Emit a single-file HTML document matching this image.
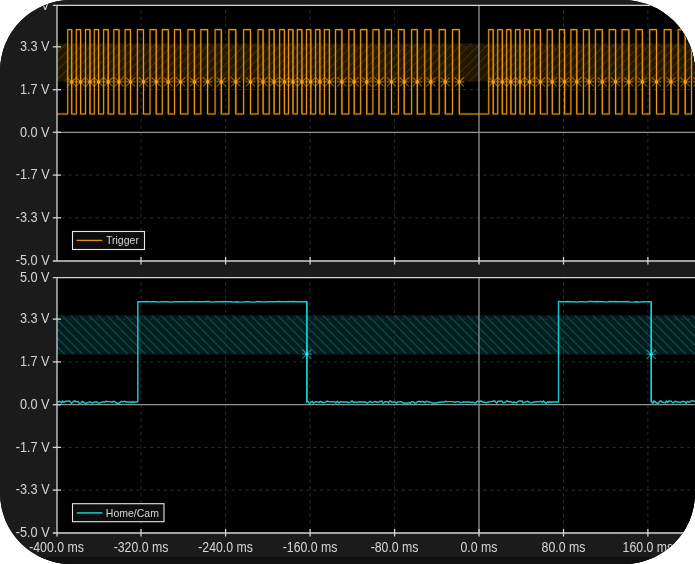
<!DOCTYPE html>
<html><head><meta charset="utf-8"><title>Scope</title>
<style>
html,body{margin:0;padding:0;background:#fff;}
body{width:695px;height:564px;overflow:hidden;}
#scope{width:695px;height:564px;border-radius:71px 72px 71px 71px;overflow:hidden;background:#1b1b1b;position:relative;}
#scope svg{display:block;}
</style></head><body>
<div id="scope">
<svg width="695" height="564" viewBox="0 0 695 564">
<defs>
<clipPath id="c1"><rect x="57" y="5.3" width="640" height="255.7"/></clipPath>
<clipPath id="c2"><rect x="57" y="277.6" width="640" height="255.4"/></clipPath>
<filter id="bl" x="-5%" y="-5%" width="110%" height="110%"><feGaussianBlur stdDeviation="0.45"/></filter>
<filter id="bt" x="-5%" y="-5%" width="110%" height="110%"><feGaussianBlur stdDeviation="0.3"/></filter>
<filter id="bh" x="-5%" y="-5%" width="110%" height="110%"><feGaussianBlur stdDeviation="0.7"/></filter>
</defs>
<rect width="695" height="564" fill="#1b1b1b"/>
<rect y="556.6" width="695" height="8" fill="#101010"/>
<rect x="57" y="5.3" width="640" height="255.7" fill="#000"/>
<rect x="57" y="277.6" width="640" height="255.4" fill="#000"/>
<clipPath id="b1"><rect x="57" y="43.6" width="640" height="38.0"/></clipPath>
<clipPath id="b2"><rect x="57" y="315.4" width="640" height="38.8"/></clipPath>
<rect x="57" y="43.6" width="640" height="38.0" fill="#201500" filter="url(#bl)"/>
<rect x="57" y="315.4" width="640" height="38.8" fill="#021f1f" filter="url(#bl)"/>
<g clip-path="url(#b1)"><path d="M-188.3 82L-149.3 43M-179.3 82L-140.3 43M-170.3 82L-131.3 43M-161.3 82L-122.3 43M-152.3 82L-113.3 43M-143.3 82L-104.3 43M-134.3 82L-95.3 43M-125.3 82L-86.3 43M-116.3 82L-77.3 43M-107.3 82L-68.3 43M-98.3 82L-59.3 43M-89.3 82L-50.3 43M-80.3 82L-41.3 43M-71.3 82L-32.3 43M-62.3 82L-23.3 43M-53.3 82L-14.3 43M-44.3 82L-5.3 43M-35.3 82L3.7 43M-26.3 82L12.7 43M-17.3 82L21.7 43M-8.3 82L30.7 43M0.7 82L39.7 43M9.7 82L48.7 43M18.7 82L57.7 43M27.7 82L66.7 43M36.7 82L75.7 43M45.7 82L84.7 43M54.7 82L93.7 43M63.7 82L102.7 43M72.7 82L111.7 43M81.7 82L120.7 43M90.7 82L129.7 43M99.7 82L138.7 43M108.7 82L147.7 43M117.7 82L156.7 43M126.7 82L165.7 43M135.7 82L174.7 43M144.7 82L183.7 43M153.7 82L192.7 43M162.7 82L201.7 43M171.7 82L210.7 43M180.7 82L219.7 43M189.7 82L228.7 43M198.7 82L237.7 43M207.7 82L246.7 43M216.7 82L255.7 43M225.7 82L264.7 43M234.7 82L273.7 43M243.7 82L282.7 43M252.7 82L291.7 43M261.7 82L300.7 43M270.7 82L309.7 43M279.7 82L318.7 43M288.7 82L327.7 43M297.7 82L336.7 43M306.7 82L345.7 43M315.7 82L354.7 43M324.7 82L363.7 43M333.7 82L372.7 43M342.7 82L381.7 43M351.7 82L390.7 43M360.7 82L399.7 43M369.7 82L408.7 43M378.7 82L417.7 43M387.7 82L426.7 43M396.7 82L435.7 43M405.7 82L444.7 43M414.7 82L453.7 43M423.7 82L462.7 43M432.7 82L471.7 43M441.7 82L480.7 43M450.7 82L489.7 43M459.7 82L498.7 43M468.7 82L507.7 43M477.7 82L516.7 43M486.7 82L525.7 43M495.7 82L534.7 43M504.7 82L543.7 43M513.7 82L552.7 43M522.7 82L561.7 43M531.7 82L570.7 43M540.7 82L579.7 43M549.7 82L588.7 43M558.7 82L597.7 43M567.7 82L606.7 43M576.7 82L615.7 43M585.7 82L624.7 43M594.7 82L633.7 43M603.7 82L642.7 43M612.7 82L651.7 43M621.7 82L660.7 43M630.7 82L669.7 43M639.7 82L678.7 43M648.7 82L687.7 43M657.7 82L696.7 43M666.7 82L705.7 43M675.7 82L714.7 43M684.7 82L723.7 43M693.7 82L732.7 43" stroke="#3c2906" stroke-width="1.6" fill="none" filter="url(#bh)"/></g>
<g clip-path="url(#b2)"><path d="M-73.6 315L-33.6 355M-64.6 315L-24.6 355M-55.6 315L-15.6 355M-46.6 315L-6.6 355M-37.6 315L2.4 355M-28.6 315L11.4 355M-19.6 315L20.4 355M-10.6 315L29.4 355M-1.6 315L38.4 355M7.4 315L47.4 355M16.4 315L56.4 355M25.4 315L65.4 355M34.4 315L74.4 355M43.4 315L83.4 355M52.4 315L92.4 355M61.4 315L101.4 355M70.4 315L110.4 355M79.4 315L119.4 355M88.4 315L128.4 355M97.4 315L137.4 355M106.4 315L146.4 355M115.4 315L155.4 355M124.4 315L164.4 355M133.4 315L173.4 355M142.4 315L182.4 355M151.4 315L191.4 355M160.4 315L200.4 355M169.4 315L209.4 355M178.4 315L218.4 355M187.4 315L227.4 355M196.4 315L236.4 355M205.4 315L245.4 355M214.4 315L254.4 355M223.4 315L263.4 355M232.4 315L272.4 355M241.4 315L281.4 355M250.4 315L290.4 355M259.4 315L299.4 355M268.4 315L308.4 355M277.4 315L317.4 355M286.4 315L326.4 355M295.4 315L335.4 355M304.4 315L344.4 355M313.4 315L353.4 355M322.4 315L362.4 355M331.4 315L371.4 355M340.4 315L380.4 355M349.4 315L389.4 355M358.4 315L398.4 355M367.4 315L407.4 355M376.4 315L416.4 355M385.4 315L425.4 355M394.4 315L434.4 355M403.4 315L443.4 355M412.4 315L452.4 355M421.4 315L461.4 355M430.4 315L470.4 355M439.4 315L479.4 355M448.4 315L488.4 355M457.4 315L497.4 355M466.4 315L506.4 355M475.4 315L515.4 355M484.4 315L524.4 355M493.4 315L533.4 355M502.4 315L542.4 355M511.4 315L551.4 355M520.4 315L560.4 355M529.4 315L569.4 355M538.4 315L578.4 355M547.4 315L587.4 355M556.4 315L596.4 355M565.4 315L605.4 355M574.4 315L614.4 355M583.4 315L623.4 355M592.4 315L632.4 355M601.4 315L641.4 355M610.4 315L650.4 355M619.4 315L659.4 355M628.4 315L668.4 355M637.4 315L677.4 355M646.4 315L686.4 355M655.4 315L695.4 355M664.4 315L704.4 355M673.4 315L713.4 355M682.4 315L722.4 355M691.4 315L731.4 355" stroke="#0a4444" stroke-width="1.6" fill="none" filter="url(#bh)"/></g>
<g stroke="#303030" stroke-width="0.9" stroke-dasharray="3.4 3.4" stroke-dashoffset="2.2" fill="none" filter="url(#bl)">
<path d="M141 5.3V261"/>
<path d="M141 277.6V533"/>
<path d="M225.6 5.3V261"/>
<path d="M225.6 277.6V533"/>
<path d="M310.1 5.3V261"/>
<path d="M310.1 277.6V533"/>
<path d="M394.6 5.3V261"/>
<path d="M394.6 277.6V533"/>
<path d="M563.5 5.3V261"/>
<path d="M563.5 277.6V533"/>
<path d="M647.9 5.3V261"/>
<path d="M647.9 277.6V533"/>
<path d="M57 46.8H700"/>
<path d="M57 89.7H700"/>
<path d="M57 175.1H700"/>
<path d="M57 217.8H700"/>
<path d="M57 319.1H700"/>
<path d="M57 361.9H700"/>
<path d="M57 447.4H700"/>
<path d="M57 490.1H700"/>
</g>
<g stroke="#949494" stroke-width="1.3" fill="none" filter="url(#bl)">
<path d="M57 132.3H700"/>
<path d="M57 404.7H700"/>
<path d="M479 5.3V261"/>
<path d="M479 277.6V533"/>
</g>
<g clip-path="url(#c1)"><g filter="url(#bl)"><path d="M57 114 H67.7 V29.6 H71.7 V114 H76.3 V29.6 H80.6 V114 H85.5 V29.6 H90 V114 H94.3 V29.6 H98.6 V114 H103.6 V29.6 H108.2 V114 H113.8 V29.6 H119 V114 H125.1 V29.6 H130.5 V114 H137.4 V29.6 H143.5 V114 H150 V29.6 H156.2 V114 H162.3 V29.6 H168.3 V114 H174.5 V29.6 H180.5 V114 H187.9 V29.6 H194.4 V114 H200.8 V29.6 H207.6 V114 H215.1 V29.6 H221.3 V114 H228.9 V29.6 H235.8 V114 H243.6 V29.6 H250.5 V114 H258 V29.6 H263.1 V114 H269.2 V29.6 H274.1 V114 H279.6 V29.6 H284.4 V114 H288.5 V29.6 H293 V114 H297.3 V29.6 H301.9 V114 H306.5 V29.6 H310.8 V114 H315.6 V29.6 H319.9 V114 H324.4 V29.6 H329.4 V114 H335.5 V29.6 H341.9 V114 H348.8 V29.6 H354.2 V114 H360.6 V29.6 H366.8 V114 H372.9 V29.6 H379 V114 H385.2 V29.6 H391.5 V114 H398.4 V29.6 H404.2 V114 H411.6 V29.6 H417.3 V114 H424.7 V29.6 H430.9 V114 H439.2 V29.6 H445.3 V114 H452.5 V29.6 H459.3 V114 H488.7 V29.6 H493.2 V114 H497.7 V29.6 H502.3 V114 H506.6 V29.6 H510.9 V114 H515.5 V29.6 H520 V114 H524.6 V29.6 H529.6 V114 H534.6 V29.6 H540.4 V114 H547.2 V29.6 H552.3 V114 H559.4 V29.6 H564.6 V114 H570.9 V29.6 H576.8 V114 H583.4 V29.6 H589.2 V114 H595.4 V29.6 H602.3 V114 H609.2 V29.6 H615.6 V114 H622.1 V29.6 H628.9 V114 H636 V29.6 H642.4 V114 H649.7 V29.6 H656.5 V114 H664.2 V29.6 H671 V114 H678.2 V29.6 H685.2 V114 H691.5 V29.6 H698 V114 H700" stroke="#e6930a" stroke-width="2.4" stroke-opacity="0.22" fill="none" stroke-linejoin="round"/><path d="M57 114 H67.7 V29.6 H71.7 V114 H76.3 V29.6 H80.6 V114 H85.5 V29.6 H90 V114 H94.3 V29.6 H98.6 V114 H103.6 V29.6 H108.2 V114 H113.8 V29.6 H119 V114 H125.1 V29.6 H130.5 V114 H137.4 V29.6 H143.5 V114 H150 V29.6 H156.2 V114 H162.3 V29.6 H168.3 V114 H174.5 V29.6 H180.5 V114 H187.9 V29.6 H194.4 V114 H200.8 V29.6 H207.6 V114 H215.1 V29.6 H221.3 V114 H228.9 V29.6 H235.8 V114 H243.6 V29.6 H250.5 V114 H258 V29.6 H263.1 V114 H269.2 V29.6 H274.1 V114 H279.6 V29.6 H284.4 V114 H288.5 V29.6 H293 V114 H297.3 V29.6 H301.9 V114 H306.5 V29.6 H310.8 V114 H315.6 V29.6 H319.9 V114 H324.4 V29.6 H329.4 V114 H335.5 V29.6 H341.9 V114 H348.8 V29.6 H354.2 V114 H360.6 V29.6 H366.8 V114 H372.9 V29.6 H379 V114 H385.2 V29.6 H391.5 V114 H398.4 V29.6 H404.2 V114 H411.6 V29.6 H417.3 V114 H424.7 V29.6 H430.9 V114 H439.2 V29.6 H445.3 V114 H452.5 V29.6 H459.3 V114 H488.7 V29.6 H493.2 V114 H497.7 V29.6 H502.3 V114 H506.6 V29.6 H510.9 V114 H515.5 V29.6 H520 V114 H524.6 V29.6 H529.6 V114 H534.6 V29.6 H540.4 V114 H547.2 V29.6 H552.3 V114 H559.4 V29.6 H564.6 V114 H570.9 V29.6 H576.8 V114 H583.4 V29.6 H589.2 V114 H595.4 V29.6 H602.3 V114 H609.2 V29.6 H615.6 V114 H622.1 V29.6 H628.9 V114 H636 V29.6 H642.4 V114 H649.7 V29.6 H656.5 V114 H664.2 V29.6 H671 V114 H678.2 V29.6 H685.2 V114 H691.5 V29.6 H698 V114 H700" stroke="#e6930a" stroke-width="1.05" fill="none" stroke-linejoin="round"/><path d="M71.7 30.1V113.5M80.6 30.1V113.5M90 30.1V113.5M98.6 30.1V113.5M108.2 30.1V113.5M119 30.1V113.5M130.5 30.1V113.5M143.5 30.1V113.5M156.2 30.1V113.5M168.3 30.1V113.5M180.5 30.1V113.5M194.4 30.1V113.5M207.6 30.1V113.5M221.3 30.1V113.5M235.8 30.1V113.5M250.5 30.1V113.5M263.1 30.1V113.5M274.1 30.1V113.5M284.4 30.1V113.5M293 30.1V113.5M301.9 30.1V113.5M310.8 30.1V113.5M319.9 30.1V113.5M329.4 30.1V113.5M341.9 30.1V113.5M354.2 30.1V113.5M366.8 30.1V113.5M379 30.1V113.5M391.5 30.1V113.5M404.2 30.1V113.5M417.3 30.1V113.5M430.9 30.1V113.5M445.3 30.1V113.5M459.3 30.1V113.5M493.2 30.1V113.5M502.3 30.1V113.5M510.9 30.1V113.5M520 30.1V113.5M529.6 30.1V113.5M540.4 30.1V113.5M552.3 30.1V113.5M564.6 30.1V113.5M576.8 30.1V113.5M589.2 30.1V113.5M602.3 30.1V113.5M615.6 30.1V113.5M628.9 30.1V113.5M642.4 30.1V113.5M656.5 30.1V113.5M671 30.1V113.5M685.2 30.1V113.5M698 30.1V113.5" stroke="#ffa210" stroke-width="0.8" stroke-opacity="0.7" fill="none"/><path d="M66.8 81.9H76.6M71.7 77V86.8M67.1 77.4L76.3 86.4M67.1 86.4L76.3 77.4" stroke="#ffa414" stroke-width="1.1" stroke-opacity="0.55" fill="none"/><circle cx="71.7" cy="81.9" r="1.6" fill="#ffa414" fill-opacity="0.95"/><path d="M75.7 81.9H85.5M80.6 77V86.8M76 77.4L85.2 86.4M76 86.4L85.2 77.4" stroke="#ffa414" stroke-width="1.1" stroke-opacity="0.55" fill="none"/><circle cx="80.6" cy="81.9" r="1.6" fill="#ffa414" fill-opacity="0.95"/><path d="M85.1 81.9H94.9M90 77V86.8M85.4 77.4L94.6 86.4M85.4 86.4L94.6 77.4" stroke="#ffa414" stroke-width="1.1" stroke-opacity="0.55" fill="none"/><circle cx="90" cy="81.9" r="1.6" fill="#ffa414" fill-opacity="0.95"/><path d="M93.7 81.9H103.5M98.6 77V86.8M94 77.4L103.2 86.4M94 86.4L103.2 77.4" stroke="#ffa414" stroke-width="1.1" stroke-opacity="0.55" fill="none"/><circle cx="98.6" cy="81.9" r="1.6" fill="#ffa414" fill-opacity="0.95"/><path d="M103.3 81.9H113.1M108.2 77V86.8M103.6 77.4L112.8 86.4M103.6 86.4L112.8 77.4" stroke="#ffa414" stroke-width="1.1" stroke-opacity="0.55" fill="none"/><circle cx="108.2" cy="81.9" r="1.6" fill="#ffa414" fill-opacity="0.95"/><path d="M114.1 81.9H123.9M119 77V86.8M114.4 77.4L123.6 86.4M114.4 86.4L123.6 77.4" stroke="#ffa414" stroke-width="1.1" stroke-opacity="0.55" fill="none"/><circle cx="119" cy="81.9" r="1.6" fill="#ffa414" fill-opacity="0.95"/><path d="M125.6 81.9H135.4M130.5 77V86.8M125.9 77.4L135.1 86.4M125.9 86.4L135.1 77.4" stroke="#ffa414" stroke-width="1.1" stroke-opacity="0.55" fill="none"/><circle cx="130.5" cy="81.9" r="1.6" fill="#ffa414" fill-opacity="0.95"/><path d="M138.6 81.9H148.4M143.5 77V86.8M138.9 77.4L148.1 86.4M138.9 86.4L148.1 77.4" stroke="#ffa414" stroke-width="1.1" stroke-opacity="0.55" fill="none"/><circle cx="143.5" cy="81.9" r="1.6" fill="#ffa414" fill-opacity="0.95"/><path d="M151.3 81.9H161.1M156.2 77V86.8M151.6 77.4L160.8 86.4M151.6 86.4L160.8 77.4" stroke="#ffa414" stroke-width="1.1" stroke-opacity="0.55" fill="none"/><circle cx="156.2" cy="81.9" r="1.6" fill="#ffa414" fill-opacity="0.95"/><path d="M163.4 81.9H173.2M168.3 77V86.8M163.7 77.4L172.9 86.4M163.7 86.4L172.9 77.4" stroke="#ffa414" stroke-width="1.1" stroke-opacity="0.55" fill="none"/><circle cx="168.3" cy="81.9" r="1.6" fill="#ffa414" fill-opacity="0.95"/><path d="M175.6 81.9H185.4M180.5 77V86.8M175.9 77.4L185.1 86.4M175.9 86.4L185.1 77.4" stroke="#ffa414" stroke-width="1.1" stroke-opacity="0.55" fill="none"/><circle cx="180.5" cy="81.9" r="1.6" fill="#ffa414" fill-opacity="0.95"/><path d="M189.5 81.9H199.3M194.4 77V86.8M189.8 77.4L199 86.4M189.8 86.4L199 77.4" stroke="#ffa414" stroke-width="1.1" stroke-opacity="0.55" fill="none"/><circle cx="194.4" cy="81.9" r="1.6" fill="#ffa414" fill-opacity="0.95"/><path d="M202.7 81.9H212.5M207.6 77V86.8M203 77.4L212.2 86.4M203 86.4L212.2 77.4" stroke="#ffa414" stroke-width="1.1" stroke-opacity="0.55" fill="none"/><circle cx="207.6" cy="81.9" r="1.6" fill="#ffa414" fill-opacity="0.95"/><path d="M216.4 81.9H226.2M221.3 77V86.8M216.7 77.4L225.9 86.4M216.7 86.4L225.9 77.4" stroke="#ffa414" stroke-width="1.1" stroke-opacity="0.55" fill="none"/><circle cx="221.3" cy="81.9" r="1.6" fill="#ffa414" fill-opacity="0.95"/><path d="M230.9 81.9H240.7M235.8 77V86.8M231.2 77.4L240.4 86.4M231.2 86.4L240.4 77.4" stroke="#ffa414" stroke-width="1.1" stroke-opacity="0.55" fill="none"/><circle cx="235.8" cy="81.9" r="1.6" fill="#ffa414" fill-opacity="0.95"/><path d="M245.6 81.9H255.4M250.5 77V86.8M245.9 77.4L255.1 86.4M245.9 86.4L255.1 77.4" stroke="#ffa414" stroke-width="1.1" stroke-opacity="0.55" fill="none"/><circle cx="250.5" cy="81.9" r="1.6" fill="#ffa414" fill-opacity="0.95"/><path d="M258.2 81.9H268M263.1 77V86.8M258.5 77.4L267.7 86.4M258.5 86.4L267.7 77.4" stroke="#ffa414" stroke-width="1.1" stroke-opacity="0.55" fill="none"/><circle cx="263.1" cy="81.9" r="1.6" fill="#ffa414" fill-opacity="0.95"/><path d="M269.2 81.9H279M274.1 77V86.8M269.5 77.4L278.7 86.4M269.5 86.4L278.7 77.4" stroke="#ffa414" stroke-width="1.1" stroke-opacity="0.55" fill="none"/><circle cx="274.1" cy="81.9" r="1.6" fill="#ffa414" fill-opacity="0.95"/><path d="M279.5 81.9H289.3M284.4 77V86.8M279.8 77.4L289 86.4M279.8 86.4L289 77.4" stroke="#ffa414" stroke-width="1.1" stroke-opacity="0.55" fill="none"/><circle cx="284.4" cy="81.9" r="1.6" fill="#ffa414" fill-opacity="0.95"/><path d="M288.1 81.9H297.9M293 77V86.8M288.4 77.4L297.6 86.4M288.4 86.4L297.6 77.4" stroke="#ffa414" stroke-width="1.1" stroke-opacity="0.55" fill="none"/><circle cx="293" cy="81.9" r="1.6" fill="#ffa414" fill-opacity="0.95"/><path d="M297 81.9H306.8M301.9 77V86.8M297.3 77.4L306.5 86.4M297.3 86.4L306.5 77.4" stroke="#ffa414" stroke-width="1.1" stroke-opacity="0.55" fill="none"/><circle cx="301.9" cy="81.9" r="1.6" fill="#ffa414" fill-opacity="0.95"/><path d="M305.9 81.9H315.7M310.8 77V86.8M306.2 77.4L315.4 86.4M306.2 86.4L315.4 77.4" stroke="#ffa414" stroke-width="1.1" stroke-opacity="0.55" fill="none"/><circle cx="310.8" cy="81.9" r="1.6" fill="#ffa414" fill-opacity="0.95"/><path d="M315 81.9H324.8M319.9 77V86.8M315.3 77.4L324.5 86.4M315.3 86.4L324.5 77.4" stroke="#ffa414" stroke-width="1.1" stroke-opacity="0.55" fill="none"/><circle cx="319.9" cy="81.9" r="1.6" fill="#ffa414" fill-opacity="0.95"/><path d="M324.5 81.9H334.3M329.4 77V86.8M324.8 77.4L334 86.4M324.8 86.4L334 77.4" stroke="#ffa414" stroke-width="1.1" stroke-opacity="0.55" fill="none"/><circle cx="329.4" cy="81.9" r="1.6" fill="#ffa414" fill-opacity="0.95"/><path d="M337 81.9H346.8M341.9 77V86.8M337.3 77.4L346.5 86.4M337.3 86.4L346.5 77.4" stroke="#ffa414" stroke-width="1.1" stroke-opacity="0.55" fill="none"/><circle cx="341.9" cy="81.9" r="1.6" fill="#ffa414" fill-opacity="0.95"/><path d="M349.3 81.9H359.1M354.2 77V86.8M349.6 77.4L358.8 86.4M349.6 86.4L358.8 77.4" stroke="#ffa414" stroke-width="1.1" stroke-opacity="0.55" fill="none"/><circle cx="354.2" cy="81.9" r="1.6" fill="#ffa414" fill-opacity="0.95"/><path d="M361.9 81.9H371.7M366.8 77V86.8M362.2 77.4L371.4 86.4M362.2 86.4L371.4 77.4" stroke="#ffa414" stroke-width="1.1" stroke-opacity="0.55" fill="none"/><circle cx="366.8" cy="81.9" r="1.6" fill="#ffa414" fill-opacity="0.95"/><path d="M374.1 81.9H383.9M379 77V86.8M374.4 77.4L383.6 86.4M374.4 86.4L383.6 77.4" stroke="#ffa414" stroke-width="1.1" stroke-opacity="0.55" fill="none"/><circle cx="379" cy="81.9" r="1.6" fill="#ffa414" fill-opacity="0.95"/><path d="M386.6 81.9H396.4M391.5 77V86.8M386.9 77.4L396.1 86.4M386.9 86.4L396.1 77.4" stroke="#ffa414" stroke-width="1.1" stroke-opacity="0.55" fill="none"/><circle cx="391.5" cy="81.9" r="1.6" fill="#ffa414" fill-opacity="0.95"/><path d="M399.3 81.9H409.1M404.2 77V86.8M399.6 77.4L408.8 86.4M399.6 86.4L408.8 77.4" stroke="#ffa414" stroke-width="1.1" stroke-opacity="0.55" fill="none"/><circle cx="404.2" cy="81.9" r="1.6" fill="#ffa414" fill-opacity="0.95"/><path d="M412.4 81.9H422.2M417.3 77V86.8M412.7 77.4L421.9 86.4M412.7 86.4L421.9 77.4" stroke="#ffa414" stroke-width="1.1" stroke-opacity="0.55" fill="none"/><circle cx="417.3" cy="81.9" r="1.6" fill="#ffa414" fill-opacity="0.95"/><path d="M426 81.9H435.8M430.9 77V86.8M426.3 77.4L435.5 86.4M426.3 86.4L435.5 77.4" stroke="#ffa414" stroke-width="1.1" stroke-opacity="0.55" fill="none"/><circle cx="430.9" cy="81.9" r="1.6" fill="#ffa414" fill-opacity="0.95"/><path d="M440.4 81.9H450.2M445.3 77V86.8M440.7 77.4L449.9 86.4M440.7 86.4L449.9 77.4" stroke="#ffa414" stroke-width="1.1" stroke-opacity="0.55" fill="none"/><circle cx="445.3" cy="81.9" r="1.6" fill="#ffa414" fill-opacity="0.95"/><path d="M454.4 81.9H464.2M459.3 77V86.8M454.7 77.4L463.9 86.4M454.7 86.4L463.9 77.4" stroke="#ffa414" stroke-width="1.1" stroke-opacity="0.55" fill="none"/><circle cx="459.3" cy="81.9" r="1.6" fill="#ffa414" fill-opacity="0.95"/><path d="M488.3 81.9H498.1M493.2 77V86.8M488.6 77.4L497.8 86.4M488.6 86.4L497.8 77.4" stroke="#ffa414" stroke-width="1.1" stroke-opacity="0.55" fill="none"/><circle cx="493.2" cy="81.9" r="1.6" fill="#ffa414" fill-opacity="0.95"/><path d="M497.4 81.9H507.2M502.3 77V86.8M497.7 77.4L506.9 86.4M497.7 86.4L506.9 77.4" stroke="#ffa414" stroke-width="1.1" stroke-opacity="0.55" fill="none"/><circle cx="502.3" cy="81.9" r="1.6" fill="#ffa414" fill-opacity="0.95"/><path d="M506 81.9H515.8M510.9 77V86.8M506.3 77.4L515.5 86.4M506.3 86.4L515.5 77.4" stroke="#ffa414" stroke-width="1.1" stroke-opacity="0.55" fill="none"/><circle cx="510.9" cy="81.9" r="1.6" fill="#ffa414" fill-opacity="0.95"/><path d="M515.1 81.9H524.9M520 77V86.8M515.4 77.4L524.6 86.4M515.4 86.4L524.6 77.4" stroke="#ffa414" stroke-width="1.1" stroke-opacity="0.55" fill="none"/><circle cx="520" cy="81.9" r="1.6" fill="#ffa414" fill-opacity="0.95"/><path d="M524.7 81.9H534.5M529.6 77V86.8M525 77.4L534.2 86.4M525 86.4L534.2 77.4" stroke="#ffa414" stroke-width="1.1" stroke-opacity="0.55" fill="none"/><circle cx="529.6" cy="81.9" r="1.6" fill="#ffa414" fill-opacity="0.95"/><path d="M535.5 81.9H545.3M540.4 77V86.8M535.8 77.4L545 86.4M535.8 86.4L545 77.4" stroke="#ffa414" stroke-width="1.1" stroke-opacity="0.55" fill="none"/><circle cx="540.4" cy="81.9" r="1.6" fill="#ffa414" fill-opacity="0.95"/><path d="M547.4 81.9H557.2M552.3 77V86.8M547.7 77.4L556.9 86.4M547.7 86.4L556.9 77.4" stroke="#ffa414" stroke-width="1.1" stroke-opacity="0.55" fill="none"/><circle cx="552.3" cy="81.9" r="1.6" fill="#ffa414" fill-opacity="0.95"/><path d="M559.7 81.9H569.5M564.6 77V86.8M560 77.4L569.2 86.4M560 86.4L569.2 77.4" stroke="#ffa414" stroke-width="1.1" stroke-opacity="0.55" fill="none"/><circle cx="564.6" cy="81.9" r="1.6" fill="#ffa414" fill-opacity="0.95"/><path d="M571.9 81.9H581.7M576.8 77V86.8M572.2 77.4L581.4 86.4M572.2 86.4L581.4 77.4" stroke="#ffa414" stroke-width="1.1" stroke-opacity="0.55" fill="none"/><circle cx="576.8" cy="81.9" r="1.6" fill="#ffa414" fill-opacity="0.95"/><path d="M584.3 81.9H594.1M589.2 77V86.8M584.6 77.4L593.8 86.4M584.6 86.4L593.8 77.4" stroke="#ffa414" stroke-width="1.1" stroke-opacity="0.55" fill="none"/><circle cx="589.2" cy="81.9" r="1.6" fill="#ffa414" fill-opacity="0.95"/><path d="M597.4 81.9H607.2M602.3 77V86.8M597.7 77.4L606.9 86.4M597.7 86.4L606.9 77.4" stroke="#ffa414" stroke-width="1.1" stroke-opacity="0.55" fill="none"/><circle cx="602.3" cy="81.9" r="1.6" fill="#ffa414" fill-opacity="0.95"/><path d="M610.7 81.9H620.5M615.6 77V86.8M611 77.4L620.2 86.4M611 86.4L620.2 77.4" stroke="#ffa414" stroke-width="1.1" stroke-opacity="0.55" fill="none"/><circle cx="615.6" cy="81.9" r="1.6" fill="#ffa414" fill-opacity="0.95"/><path d="M624 81.9H633.8M628.9 77V86.8M624.3 77.4L633.5 86.4M624.3 86.4L633.5 77.4" stroke="#ffa414" stroke-width="1.1" stroke-opacity="0.55" fill="none"/><circle cx="628.9" cy="81.9" r="1.6" fill="#ffa414" fill-opacity="0.95"/><path d="M637.5 81.9H647.3M642.4 77V86.8M637.8 77.4L647 86.4M637.8 86.4L647 77.4" stroke="#ffa414" stroke-width="1.1" stroke-opacity="0.55" fill="none"/><circle cx="642.4" cy="81.9" r="1.6" fill="#ffa414" fill-opacity="0.95"/><path d="M651.6 81.9H661.4M656.5 77V86.8M651.9 77.4L661.1 86.4M651.9 86.4L661.1 77.4" stroke="#ffa414" stroke-width="1.1" stroke-opacity="0.55" fill="none"/><circle cx="656.5" cy="81.9" r="1.6" fill="#ffa414" fill-opacity="0.95"/><path d="M666.1 81.9H675.9M671 77V86.8M666.4 77.4L675.6 86.4M666.4 86.4L675.6 77.4" stroke="#ffa414" stroke-width="1.1" stroke-opacity="0.55" fill="none"/><circle cx="671" cy="81.9" r="1.6" fill="#ffa414" fill-opacity="0.95"/><path d="M680.3 81.9H690.1M685.2 77V86.8M680.6 77.4L689.8 86.4M680.6 86.4L689.8 77.4" stroke="#ffa414" stroke-width="1.1" stroke-opacity="0.55" fill="none"/><circle cx="685.2" cy="81.9" r="1.6" fill="#ffa414" fill-opacity="0.95"/><path d="M693.1 81.9H702.9M698 77V86.8M693.4 77.4L702.6 86.4M693.4 86.4L702.6 77.4" stroke="#ffa414" stroke-width="1.1" stroke-opacity="0.55" fill="none"/><circle cx="698" cy="81.9" r="1.6" fill="#ffa414" fill-opacity="0.95"/></g></g>
<g clip-path="url(#c2)"><g filter="url(#bl)"><path d="M57 401.9 L58.1 402.2 L59.2 401.3 L60.3 401.9 L61.4 402.9 L62.5 400.9 L63.6 402.2 L65.9 401.3 L67 401.3 L69.3 400.9 L70.4 401.9 L71.5 403.2 L73.8 400.9 L74.9 400.9 L76 401.9 L78.3 401.6 L79.4 403.2 L81.1 402.9 L82.2 401.3 L83.3 401.9 L84.4 402.9 L85.5 403.2 L86.6 403.2 L87.7 402.5 L90 401.9 L92.3 403.2 L94.6 401.9 L96.3 401.9 L97.4 401.9 L98.5 403.2 L100.2 402.9 L102.5 401.9 L104.8 401.9 L105.9 401.3 L108.2 401.6 L109.9 401.6 L112.2 402.2 L113.3 401.3 L115 401.9 L116.7 403.2 L119 403.2 L121.3 401.3 L122.4 401.9 L124.7 401.3 L125.8 401.9 L128.1 401.9 L130.4 401.9 L131.5 402.5 L133.2 401.6 L134.3 402.5 L135.4 401.9 L137.1 401.6 L137.8 401.9 L137.8 301.8 L140.8 301.8 L143.8 301.8 L146.8 301.5 L149.8 301.8 L152.8 301.8 L155.8 301.8 L158.8 302.1 L161.8 301.8 L164.8 301.8 L167.8 301.8 L170.8 302.1 L173.8 301.8 L176.8 301.8 L179.8 301.8 L182.8 301.8 L185.8 301.8 L188.8 301.8 L191.8 301.5 L194.8 301.8 L197.8 301.8 L200.8 301.8 L203.8 301.8 L206.8 301.5 L209.8 301.8 L212.8 302.1 L215.8 301.8 L218.8 301.8 L221.8 301.8 L224.8 301.5 L227.8 301.8 L230.8 301.8 L233.8 302.1 L236.8 301.8 L239.8 302.1 L242.8 302.1 L245.8 301.8 L248.8 301.8 L251.8 302.1 L254.8 302.1 L257.8 301.5 L260.8 301.8 L263.8 302.1 L266.8 301.8 L269.8 301.8 L272.8 301.8 L275.8 301.8 L278.8 301.5 L281.8 301.8 L284.8 301.8 L287.8 301.5 L290.8 301.8 L293.8 301.5 L296.8 301.8 L299.8 301.8 L302.8 301.8 L305.8 301.5 L306.9 301.8 L306.9 401.9 L308 401.3 L309.1 403.2 L310.2 402.9 L311.3 401.9 L312.4 401.3 L313.5 403.2 L315.8 401.6 L317.5 401.9 L319.2 402.5 L320.3 401.3 L322.6 402.5 L324.9 402.5 L326.6 401.3 L327.7 401.3 L329.4 401.9 L331.7 401.6 L332.8 401.9 L334.5 401.6 L335.6 402.9 L337.3 401.3 L339 402.9 L340.7 401.6 L342.4 401.9 L344.1 401.9 L345.2 401.9 L347.5 401.9 L348.6 402.9 L350.9 401.9 L352 400.9 L353.7 402.5 L355.4 401.9 L357.1 402.5 L358.8 401.9 L359.9 401.9 L361 401.9 L363.3 401.9 L365 401.9 L367.3 403.2 L368.4 402.5 L370.1 401.3 L371.2 402.2 L372.3 402.5 L373.4 402.2 L375.1 401.3 L377.4 402.5 L379.7 401.3 L380.8 401.6 L381.9 400.9 L383 403.2 L385.3 401.6 L387.6 401.9 L388.7 402.9 L389.8 400.9 L390.9 401.3 L392 402.2 L393.1 401.9 L394.2 401.9 L395.3 401.9 L396.4 403.2 L398.1 401.9 L400.4 401.6 L401.5 401.9 L403.8 403.2 L406.1 402.9 L407.2 402.9 L408.3 402.9 L409.4 402.5 L410.5 403.2 L411.6 401.6 L412.7 401.6 L415 403.2 L416.1 402.9 L417.2 401.9 L419.5 401.3 L420.6 401.9 L421.7 401.9 L422.8 401.3 L425.1 402.9 L426.2 401.3 L428.5 401.9 L429.6 401.9 L431.9 402.9 L434.2 402.9 L435.3 402.9 L437 402.9 L438.1 402.5 L439.2 402.2 L440.3 402.2 L442.6 401.9 L443.7 401.9 L446 401.3 L447.1 401.9 L448.2 401.6 L449.9 401.6 L451.6 401.6 L453.9 401.9 L455 402.2 L457.3 401.6 L458.4 401.6 L460.7 402.9 L463 401.9 L465.3 401.9 L467 401.9 L468.1 401.9 L469.2 401.9 L471.5 402.5 L472.6 402.2 L474.3 402.9 L476 402.9 L477.1 401.3 L478.2 401.3 L479.3 401.9 L481 400.9 L482.1 401.9 L483.2 402.2 L484.9 402.2 L486 402.9 L488.3 401.9 L489.4 401.9 L490.5 401.6 L492.8 401.3 L494.5 400.9 L495.6 401.9 L496.7 403.2 L497.8 401.3 L499.5 401.3 L501.8 400.9 L503.5 402.9 L505.8 401.9 L506.9 400.9 L508 401.3 L509.1 401.9 L510.2 401.6 L511.3 401.9 L513 402.9 L514.1 401.9 L516.4 402.9 L517.5 401.9 L519.2 400.9 L520.9 400.9 L522 400.9 L523.1 402.9 L525.4 401.9 L527.7 401.3 L530 402.5 L532.3 402.9 L534 401.9 L535.1 401.9 L536.2 401.6 L538.5 401.9 L539.6 401.6 L540.7 401.3 L542.4 402.2 L543.5 400.9 L544.6 402.2 L546.3 403.2 L547.4 401.9 L548.5 402.5 L549.6 401.6 L551.3 402.5 L552.4 401.9 L554.1 401.9 L555.8 401.9 L556.9 401.9 L558 401.9 L558.5 401.9 L558.5 301.5 L561.5 301.8 L564.5 301.8 L567.5 301.5 L570.5 301.8 L573.5 301.8 L576.5 302.1 L579.5 301.8 L582.5 301.8 L585.5 302.1 L588.5 301.5 L591.5 301.5 L594.5 301.8 L597.5 301.5 L600.5 301.8 L603.5 301.8 L606.5 302.1 L609.5 301.5 L612.5 301.8 L615.5 301.5 L618.5 301.8 L621.5 301.8 L624.5 301.8 L627.5 301.5 L630.5 302.1 L633.5 302.1 L636.5 301.8 L639.5 302.1 L642.5 301.8 L645.5 301.8 L648.5 301.8 L651.2 301.8 L651.2 401.6 L652.9 403.2 L654 400.9 L656.3 402.9 L657.4 402.9 L658.5 403.2 L659.6 401.3 L660.7 400.9 L661.8 401.9 L662.9 402.2 L665.2 402.9 L666.3 400.9 L667.4 402.5 L669.1 400.9 L671.4 401.3 L672.5 402.9 L673.6 402.5 L675.3 401.3 L677 401.9 L678.1 401.9 L680.4 402.5 L682.7 401.3 L685 401.9 L686.1 403.2 L687.2 401.3 L688.3 401.9 L690 401.9 L691.1 400.9 L693.4 400.9 L695.7 401.9 L696.8 401.9 L699.1 401.9 L700 401.9" stroke="#18cad0" stroke-width="1.45" fill="none" stroke-linejoin="round"/><path d="M306.9 302.5V401.8M651.2 302.5V401.8" stroke="#14ecf4" stroke-width="1" stroke-opacity="0.8" fill="none"/><path d="M301.9 354.1H311.7M306.8 349.2V359M302.2 349.6L311.4 358.6M302.2 358.6L311.4 349.6" stroke="#2fe0ea" stroke-width="1.1" stroke-opacity="0.55" fill="none"/><circle cx="306.8" cy="354.1" r="1.6" fill="#2fe0ea" fill-opacity="0.95"/><path d="M646.3 354.3H656.1M651.2 349.4V359.2M646.6 349.8L655.8 358.8M646.6 358.8L655.8 349.8" stroke="#2fe0ea" stroke-width="1.1" stroke-opacity="0.55" fill="none"/><circle cx="651.2" cy="354.3" r="1.6" fill="#2fe0ea" fill-opacity="0.95"/></g></g>
<g stroke="#d4d4d4" stroke-width="1.3" fill="none" filter="url(#bl)">
<path d="M57 5.3V261"/>
<path d="M57 277.6V533"/>
<path d="M52.8 5.3H700"/>
<path d="M52.8 261H700"/>
<path d="M52.8 277.6H700"/>
<path d="M52.8 533H700"/>
<path d="M52.8 46.8H61"/>
<path d="M52.8 89.7H61"/>
<path d="M52.8 132.3H61"/>
<path d="M52.8 175.1H61"/>
<path d="M52.8 217.8H61"/>
<path d="M52.8 319.1H61"/>
<path d="M52.8 361.9H61"/>
<path d="M52.8 404.7H61"/>
<path d="M52.8 447.4H61"/>
<path d="M52.8 490.1H61"/>
<path d="M141 257V264.5"/>
<path d="M141 529V536.5"/>
<path d="M225.6 257V264.5"/>
<path d="M225.6 529V536.5"/>
<path d="M310.1 257V264.5"/>
<path d="M310.1 529V536.5"/>
<path d="M394.6 257V264.5"/>
<path d="M394.6 529V536.5"/>
<path d="M479 257V264.5"/>
<path d="M479 529V536.5"/>
<path d="M563.5 257V264.5"/>
<path d="M563.5 529V536.5"/>
<path d="M647.9 257V264.5"/>
<path d="M647.9 529V536.5"/>
<path d="M57 533V536.5"/>
</g>
<g filter="url(#bl)">
<rect x="72.5" y="231.5" width="72" height="18" fill="#0e0e0e" stroke="#e8e8e8" stroke-width="1.1"/>
<path d="M76.5 240.4H102.4" stroke="#e6930a" stroke-width="1.3"/>
<rect x="72.5" y="503.7" width="91.5" height="18" fill="#0e0e0e" stroke="#e8e8e8" stroke-width="1.1"/>
<path d="M76.8 512.9H102.3" stroke="#18cad0" stroke-width="1.5"/>
</g>
<g font-family="'Liberation Sans', Arial, sans-serif" fill="#d6d6d6" filter="url(#bt)">
<text x="106" y="244.2" font-size="10.8" textLength="32.94" lengthAdjust="spacingAndGlyphs">Trigger</text>
<text x="105.8" y="516.8" font-size="10.8" textLength="53.09" lengthAdjust="spacingAndGlyphs">Home/Cam</text>
<text x="19.95" y="9.6" font-size="14.7" textLength="29.65" lengthAdjust="spacingAndGlyphs">5.0 V</text>
<text x="19.95" y="51" font-size="14.7" textLength="29.65" lengthAdjust="spacingAndGlyphs">3.3 V</text>
<text x="19.95" y="93.9" font-size="14.7" textLength="29.65" lengthAdjust="spacingAndGlyphs">1.7 V</text>
<text x="19.95" y="136.5" font-size="14.7" textLength="29.65" lengthAdjust="spacingAndGlyphs">0.0 V</text>
<text x="15.72" y="179.3" font-size="14.7" textLength="33.88" lengthAdjust="spacingAndGlyphs">-1.7 V</text>
<text x="15.72" y="222" font-size="14.7" textLength="33.88" lengthAdjust="spacingAndGlyphs">-3.3 V</text>
<text x="15.72" y="265.1" font-size="14.7" textLength="33.88" lengthAdjust="spacingAndGlyphs">-5.0 V</text>
<text x="19.95" y="281.7" font-size="14.7" textLength="29.65" lengthAdjust="spacingAndGlyphs">5.0 V</text>
<text x="19.95" y="323.3" font-size="14.7" textLength="29.65" lengthAdjust="spacingAndGlyphs">3.3 V</text>
<text x="19.95" y="366.1" font-size="14.7" textLength="29.65" lengthAdjust="spacingAndGlyphs">1.7 V</text>
<text x="19.95" y="408.9" font-size="14.7" textLength="29.65" lengthAdjust="spacingAndGlyphs">0.0 V</text>
<text x="15.72" y="451.6" font-size="14.7" textLength="33.88" lengthAdjust="spacingAndGlyphs">-1.7 V</text>
<text x="15.72" y="494.3" font-size="14.7" textLength="33.88" lengthAdjust="spacingAndGlyphs">-3.3 V</text>
<text x="15.72" y="537.1" font-size="14.7" textLength="33.88" lengthAdjust="spacingAndGlyphs">-5.0 V</text>
<text x="29.16" y="551.5" font-size="14.7" textLength="54.69" lengthAdjust="spacingAndGlyphs">-400.0 ms</text>
<text x="113.66" y="551.5" font-size="14.7" textLength="54.69" lengthAdjust="spacingAndGlyphs">-320.0 ms</text>
<text x="198.26" y="551.5" font-size="14.7" textLength="54.69" lengthAdjust="spacingAndGlyphs">-240.0 ms</text>
<text x="282.76" y="551.5" font-size="14.7" textLength="54.69" lengthAdjust="spacingAndGlyphs">-160.0 ms</text>
<text x="370.68" y="551.5" font-size="14.7" textLength="47.85" lengthAdjust="spacingAndGlyphs">-80.0 ms</text>
<text x="460.54" y="551.5" font-size="14.7" textLength="36.91" lengthAdjust="spacingAndGlyphs">0.0 ms</text>
<text x="541.62" y="551.5" font-size="14.7" textLength="43.75" lengthAdjust="spacingAndGlyphs">80.0 ms</text>
<text x="622.61" y="551.5" font-size="14.7" textLength="50.59" lengthAdjust="spacingAndGlyphs">160.0 ms</text>
</g>
</svg>
</div>
</body></html>
